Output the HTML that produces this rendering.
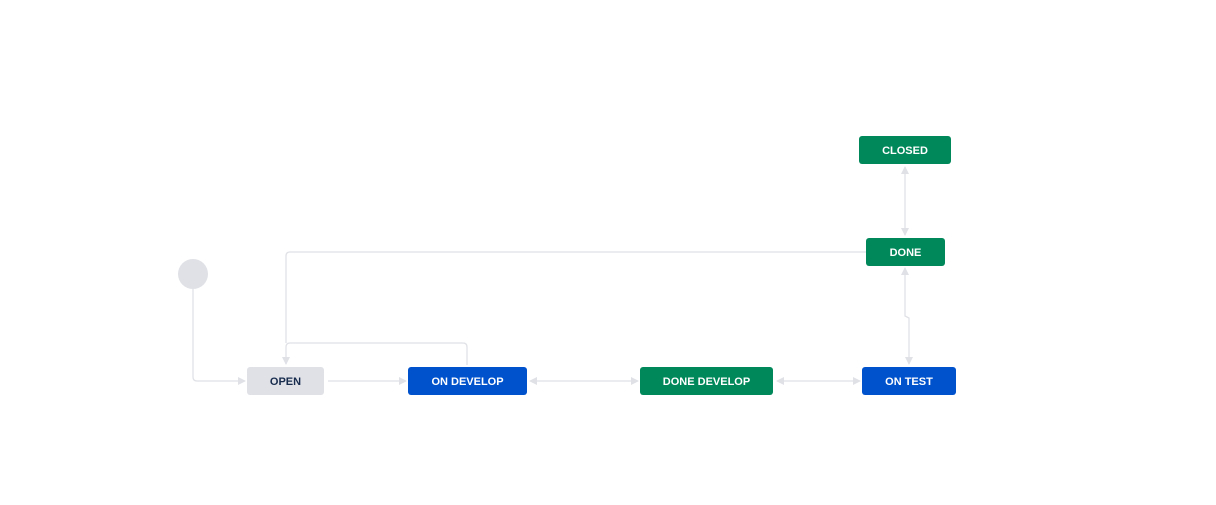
<!DOCTYPE html><html><head><style>
body{margin:0;background:#fff;width:1216px;height:505px;overflow:hidden;position:relative;font-family:"Liberation Sans",Arial,sans-serif}
.b{position:absolute;height:28px;box-sizing:border-box;padding-top:2px;border-radius:3px;color:#fff;font-size:11px;font-weight:bold;display:flex;align-items:center;justify-content:center}
.g{background:#00875a}.bl{background:#0052cc}.o{background:#dfe1e6;color:#172b4d}
</style></head><body>
<svg width="1216" height="505" style="position:absolute;left:0;top:0" fill="none" stroke="#dfe1e6" stroke-width="1.3">
<defs><marker id="a" markerWidth="8" markerHeight="8" refX="7" refY="4" orient="auto-start-reverse" markerUnits="userSpaceOnUse"><path d="M0,0L8,4L0,8z" fill="#dfe1e6" stroke="none"/></marker></defs>
<circle cx="193" cy="274" r="15" fill="#dfe1e6" stroke="none"/>
<path d="M193,289V377q0,4 4,4H245" marker-end="url(#a)"/>
<path d="M328,381H406" marker-end="url(#a)"/>
<path d="M467,365V347q0,-4 -4,-4H290q-4,0 -4,4V364" marker-end="url(#a)"/>
<path d="M866,252H290q-4,0 -4,4V343"/>
<path d="M530,381H638" marker-start="url(#a)" marker-end="url(#a)"/>
<path d="M777,381H860" marker-start="url(#a)" marker-end="url(#a)"/>
<path d="M905,268V316l4,2V364" marker-start="url(#a)" marker-end="url(#a)"/>
<path d="M905,167V235" marker-start="url(#a)" marker-end="url(#a)"/>
</svg>
<div class="b g" style="left:859px;top:136px;width:92px">CLOSED</div>
<div class="b g" style="left:866px;top:238px;width:79px">DONE</div>
<div class="b o" style="left:247px;top:367px;width:77px">OPEN</div>
<div class="b bl" style="left:408px;top:367px;width:119px">ON DEVELOP</div>
<div class="b g" style="left:640px;top:367px;width:133px">DONE DEVELOP</div>
<div class="b bl" style="left:862px;top:367px;width:94px">ON TEST</div>
</body></html>
